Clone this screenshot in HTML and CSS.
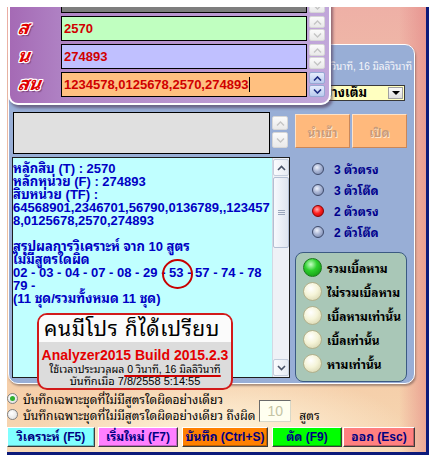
FILE: index.html
```html
<!DOCTYPE html>
<html lang="th">
<head>
<meta charset="utf-8">
<title>Analyzer2015</title>
<link rel="stylesheet" href="styles.css">
</head>
<body>
<div class="window">
  <div class="blue">
    <div class="info">ใช้เวลาประมวลผล 0 วินาที, 16 มิลลิวินาที</div>
    <div class="combo-row">
      <div class="combo">
        <span class="combo-txt">แสดงผลอย่างเต็ม</span>
        <span class="drop"><span class="tri"></span></span>
      </div>
    </div>
    <div class="io-row">
      <div class="memo"></div>
      <div class="spin2">
        <span class="sb sb-a"><svg width="9" height="5" viewBox="0 0 9 5"><path d="M1 4.5 L4.5 1 L8 4.5" fill="none" stroke="#c4c4c4" stroke-width="1.4"/></svg></span>
        <span class="sb sb-b"><svg width="9" height="5" viewBox="0 0 9 5"><path d="M1 0.5 L4.5 4 L8 0.5" fill="none" stroke="#c4c4c4" stroke-width="1.4"/></svg></span>
      </div>
      <div class="obtn obtn-a">นำเข้า</div>
      <div class="obtn obtn-b">เปิด</div>
    </div>
    <div class="main-row">
      <div class="cyan-wrap">
        <div class="cyan-text">
          <div class="ln">หลักสิบ (T) : 2570</div>
          <div class="ln">หลักหน่วย (F) : 274893</div>
          <div class="ln">สิบหน่วย (TF) :</div>
          <div class="ln">64568901,2346701,56790,0136789,,123457</div>
          <div class="ln">8,0125678,2570,274893</div>
          <div class="ln">&nbsp;</div>
          <div class="ln">สรุปผลการวิเคราะห์ จาก 10 สูตร</div>
          <div class="ln">ไม่มีสูตรใดผิด</div>
          <div class="ln">02 - 03 - 04 - 07 - 08 - 29 - <span class="circ">53</span> - 57 - 74 - 78</div>
          <div class="ln">79 -</div>
          <div class="ln">(11 ชุด/รวมทั้งหมด 11 ชุด)</div>
        </div>
        <div class="vscroll">
          <span class="sbtn"><svg width="9" height="6" viewBox="0 0 9 6"><path d="M1 5 L4.5 1.5 L8 5" fill="none" stroke="#4a5468" stroke-width="1.6"/></svg></span>
          <span class="thumb"><span class="grip"></span></span>
          <span class="track"></span>
          <span class="sbtn"><svg width="9" height="6" viewBox="0 0 9 6"><path d="M1 1 L4.5 4.5 L8 1" fill="none" stroke="#4a5468" stroke-width="1.6"/></svg></span>
        </div>
      </div>
      <div class="rcol">
        <div class="rg1">
          <div class="ri"><span class="ball ball-blue"></span><span class="ri-t">3 ตัวตรง</span></div>
          <div class="ri"><span class="ball ball-blue"></span><span class="ri-t">3 ตัวโต๊ด</span></div>
          <div class="ri"><span class="ball ball-red"></span><span class="ri-t">2 ตัวตรง</span></div>
          <div class="ri"><span class="ball ball-blue"></span><span class="ri-t">2 ตัวโต๊ด</span></div>
        </div>
        <div class="gbox">
          <div class="gi"><span class="gball gball-on"></span><span class="gi-t">รวมเบิ้ลหาม</span></div>
          <div class="gi"><span class="gball"></span><span class="gi-t">ไม่รวมเบิ้ลหาม</span></div>
          <div class="gi"><span class="gball"></span><span class="gi-t">เบิ้ลหามเท่านั้น</span></div>
          <div class="gi"><span class="gball"></span><span class="gi-t">เบิ้ลเท่านั้น</span></div>
          <div class="gi"><span class="gball"></span><span class="gi-t">หามเท่านั้น</span></div>
        </div>
      </div>
    </div>
  </div>

  <div class="opts">
    <div class="opt"><span class="radio radio-on"></span><span class="opt-t">บันทึกเฉพาะชุดที่ไม่มีสูตรใดผิดอย่างเดียว</span></div>
    <div class="opt"><span class="radio"></span><span class="opt-t">บันทึกเฉพาะชุดที่ไม่มีสูตรใดผิดอย่างเดียว ถึงผิด</span><span class="num">10</span><span class="opt-t unit">สูตร</span></div>
  </div>

  <div class="btns">
    <span class="btn btn-cyan">วิเคราะห์ (F5)</span>
    <span class="btn btn-pink">เริ่มใหม่ (F7)</span>
    <span class="btn btn-orange">บันทึก (Ctrl+S)</span>
    <span class="btn btn-green">ตัด (F9)</span>
    <span class="btn btn-salmon">ออก (Esc)</span>
  </div>

  <div class="purple">
    <div class="prow">
      <span class="lbl"></span>
      <span class="field field-gray"></span>
      <span class="spin">
        <span class="sb"><svg width="9" height="5" viewBox="0 0 9 5"><path d="M1 4.5 L4.5 1 L8 4.5" fill="none" stroke="#c4c4c4" stroke-width="1.4"/></svg></span>
        <span class="sb"><svg width="9" height="5" viewBox="0 0 9 5"><path d="M1 0.5 L4.5 4 L8 0.5" fill="none" stroke="#c4c4c4" stroke-width="1.4"/></svg></span>
      </span>
    </div>
    <div class="prow">
      <span class="lbl">ส</span>
      <span class="field field-green">2570</span>
      <span class="spin">
        <span class="sb"><svg width="9" height="5" viewBox="0 0 9 5"><path d="M1 4.5 L4.5 1 L8 4.5" fill="none" stroke="#c4c4c4" stroke-width="1.4"/></svg></span>
        <span class="sb"><svg width="9" height="5" viewBox="0 0 9 5"><path d="M1 0.5 L4.5 4 L8 0.5" fill="none" stroke="#c4c4c4" stroke-width="1.4"/></svg></span>
      </span>
    </div>
    <div class="prow">
      <span class="lbl">น</span>
      <span class="field field-lav">274893</span>
      <span class="spin">
        <span class="sb"><svg width="9" height="5" viewBox="0 0 9 5"><path d="M1 4.5 L4.5 1 L8 4.5" fill="none" stroke="#c4c4c4" stroke-width="1.4"/></svg></span>
        <span class="sb"><svg width="9" height="5" viewBox="0 0 9 5"><path d="M1 0.5 L4.5 4 L8 0.5" fill="none" stroke="#c4c4c4" stroke-width="1.4"/></svg></span>
      </span>
    </div>
    <div class="prow">
      <span class="lbl">สน</span>
      <span class="field field-orange">1234578,0125678,2570,274893<span class="caret"></span></span>
      <span class="spin">
        <span class="sb sb-on"><svg width="9" height="5" viewBox="0 0 9 5"><path d="M1 4.5 L4.5 1 L8 4.5" fill="none" stroke="#1c2c80" stroke-width="1.6"/></svg></span>
        <span class="sb sb-on"><svg width="9" height="5" viewBox="0 0 9 5"><path d="M1 0.5 L4.5 4 L8 0.5" fill="none" stroke="#1c2c80" stroke-width="1.6"/></svg></span>
      </span>
    </div>
  </div>

  <div class="promo">
    <div class="promo-top">คนมีโปร ก็ได้เปรียบ</div>
    <div class="promo-body">
      <div class="promo-title">Analyzer2015 Build 2015.2.3</div>
      <div class="promo-line promo-l2">ใช้เวลาประมวลผล<span class="ul"> 0 วินาที, 16 มิลลิวินาที</span></div>
      <div class="promo-line promo-l3">บันทึกเมื่อ 7/8/2558 5:14:55</div>
    </div>
  </div>
</div>
</body>
</html>
```

FILE: styles.css
```css
* { box-sizing: border-box; }
html, body { margin: 0; padding: 0; background: #ffffff; }
body {
  width: 435px;
  height: 463px;
  overflow: hidden;
  font-family: "Liberation Sans", "Noto Sans Thai Looped", "Waree", "Loma", "Garuda", "Noto Sans Thai", "Noto Sans", sans-serif;
  font-size: 12px;
  color: #000;
}

.window {
  position: relative;
  margin: 7px 0 0 7px;
  width: 422px;
  height: 448px;
  padding-top: 37px;
  border-right: 3px solid #0c1a7a;
  border-bottom: 3px solid #0c1a7a;
  overflow: hidden;
  background:
    linear-gradient(90deg, rgba(226,128,128,0) 392px, rgba(226,128,128,0.55) 419px),
    radial-gradient(ellipse 190px 70px at 215px 432px, rgba(255,246,222,1), rgba(255,246,222,0)),
    linear-gradient(180deg, #eeb0a6 0px, #f0bca8 80px, #f3c6a6 250px, #f5cfaa 380px, #f7d8b4 445px);
}

/* ---------- purple overlay panel ---------- */
.purple {
  position: absolute;
  left: 1px;
  top: -30px;
  width: 323px;
  height: 128px;
  padding-top: 11px;
  border: 2px solid #ffffff;
  border-top: none;
  border-radius: 0 0 10px 10px;
  background: linear-gradient(90deg, #a56ab5 0%, #b084c5 18%, #b996d0 55%, #c1a7da 100%);
  box-shadow: 2px 3px 3px rgba(70, 40, 70, 0.55);
  display: flex;
  flex-direction: column;
  gap: 3px;
}
.prow { display: flex; align-items: center; height: 25px; }
.lbl {
  width: 51px;
  padding-left: 8px;
  font-size: 18px;
  font-weight: bold;
  font-style: italic;
  color: #e00000;
  text-shadow:
    1px 0 0 #fff, -1px 0 0 #fff, 0 1px 0 #fff, 0 -1px 0 #fff,
    1px 1px 0 #fff, -1px -1px 0 #fff, 1px -1px 0 #fff, -1px 1px 0 #fff,
    2px 2px 1px rgba(60, 0, 40, 0.45);
  line-height: 25px;
  transform: skewX(-8deg);
}
.field {
  width: 246px;
  height: 25px;
  border: 1px solid #000;
  padding-left: 2px;
  font-size: 13px;
  font-weight: bold;
  line-height: 22px;
  color: #d00000;
  white-space: nowrap;
  display: flex;
  align-items: center;
}
.field-gray { background: #7e7e7e; }
.field-green { background: #c0ffc0; }
.field-lav { background: #c0c0ff; }
.field-orange { background: #ffc080; }
.caret { display: inline-block; width: 1px; height: 15px; background: #000; margin-left: 1px; }

.spin { margin-left: 2px; width: 16px; display: flex; flex-direction: column; gap: 1px; }
.sb {
  height: 12px;
  border: 1px solid #d6d6d6;
  border-radius: 2px;
  background: linear-gradient(180deg, #fbfbfb, #e9e9e9);
  display: flex;
  align-items: center;
  justify-content: center;
}
.sb-on { border-color: #97a9d4; background: linear-gradient(180deg, #e6edfd, #b9caee); }

/* ---------- blue main panel ---------- */
.blue {
  margin-left: 1px;
  width: 407px;
  height: 340px;
  border: 1px solid #ffffff;
  border-radius: 10px;
  background: #98aed6;
  box-shadow: 1px 2px 2px rgba(80, 60, 60, 0.45);
  display: flex;
  flex-direction: column;
}
.info {
  margin-top: 16px;
  height: 12px;
  line-height: 12px;
  padding-right: 2px;
  font-size: 10px;
  color: #f6f6fa;
  text-align: right;
  white-space: nowrap;
}
.combo-row { margin-top: 12px; height: 16px; display: flex; justify-content: flex-end; padding-right: 9px; }
.combo {
  width: 170px;
  height: 16px;
  border: 1px solid #3a3a3a;
  background: #ffffc0;
  display: flex;
  align-items: center;
  justify-content: flex-end;
  overflow: hidden;
}
.combo-txt { white-space: nowrap; font-size: 13px; font-weight: bold; margin-right: 21px; line-height: 14px; }
.drop {
  width: 15px;
  height: 12px;
  margin-right: 1px;
  border: 1px solid #a0a0a0;
  background: linear-gradient(180deg, #fafafa, #dedede);
  display: flex;
  align-items: center;
  justify-content: center;
}
.tri { width: 0; height: 0; border-left: 4px solid transparent; border-right: 4px solid transparent; border-top: 4px solid #000; }

.io-row { margin-top: 11px; height: 42px; display: flex; }
.memo { margin-left: 4px; width: 257px; height: 42px; border: 1px solid #000; background: #e0e0e0; }
.spin2 { margin-left: 2px; width: 16px; padding-top: 4px; display: flex; flex-direction: column; gap: 2px; }
.spin2 .sb-a { height: 14px; }
.spin2 .sb-b { height: 16px; }
.obtn {
  margin-top: 2px;
  width: 55px;
  height: 34px;
  border: 1px solid;
  border-color: #ffe2c6 #c9875a #c9875a #ffe2c6;
  background: #ffb97c;
  color: #c89b78;
  font-size: 12px;
  font-weight: bold;
  text-shadow: 1px 1px 0 #ffe6cf;
  display: flex;
  align-items: center;
  justify-content: center;
}
.obtn-a { margin-left: 7px; }
.obtn-b { margin-left: 2px; }

.main-row { margin-top: 3px; height: 225px; display: flex; align-items: flex-start; }
.cyan-wrap {
  margin-left: 3px;
  width: 278px;
  height: 221px;
  border: 1px solid #1e1e1e;
  background: #c0ffff;
  display: flex;
}
.cyan-text {
  flex: 1;
  padding-top: 4px;
  font-size: 13px;
  font-weight: bold;
  line-height: 13px;
  color: #0000c4;
  white-space: nowrap;
  overflow: hidden;
}
.ln { height: 13px; }
.circ { position: relative; }
.circ::after {
  content: "";
  position: absolute;
  left: -7px;
  top: -6px;
  width: 27px;
  height: 26px;
  border: 2px solid #c80000;
  border-radius: 50%;
}
.vscroll {
  width: 17px;
  display: flex;
  flex-direction: column;
  background: #eef1f6;
  border-left: 1px solid #d2d9e4;
}
.sbtn {
  height: 17px;
  margin: 1px 0;
  border: 1px solid #c4cedd;
  border-radius: 2px;
  background: linear-gradient(90deg, #fbfcfe, #e5eaf2);
  display: flex;
  align-items: center;
  justify-content: center;
}
.thumb {
  height: 71px;
  border: 1px solid #b3bfd3;
  border-radius: 2px;
  background: linear-gradient(90deg, #f7f9fd, #dfe5ef);
  display: flex;
  align-items: center;
  justify-content: center;
}
.grip { width: 7px; height: 5px; border-top: 1px solid #9aa6bb; border-bottom: 1px solid #9aa6bb; position: relative; }
.grip::after { content: ""; position: absolute; left: 0; right: 0; top: 1px; border-top: 1px solid #9aa6bb; }
.track { flex: 1; }

.rcol { margin-left: 5px; width: 112px; }
.rg1 { padding-top: 1px; }
.ri { height: 21px; display: flex; align-items: center; }
.ball {
  margin-left: 17px;
  width: 12px;
  height: 12px;
  border-radius: 50%;
  border: 1px solid #3e4a6a;
}
.ball-blue { background: radial-gradient(circle at 40% 35%, #eef2fc 0%, #a9b5d4 45%, #6f7fa8 100%); }
.ball-red { border-color: #8a0000; background: radial-gradient(circle at 40% 35%, #ffb0b0 0%, #ff2020 45%, #b00000 100%); }
.ri-t { margin-left: 10px; font-size: 12px; font-weight: bold; color: #00008c; white-space: nowrap; }

.gbox {
  margin-top: 10px;
  width: 112px;
  height: 130px;
  padding-top: 2px;
  border: 1px solid #3b5a82;
  border-radius: 8px;
  background: #a9c7b7;
}
.gi { height: 24px; display: flex; align-items: center; }
.gball {
  margin-left: 7px;
  width: 19px;
  height: 19px;
  border-radius: 50%;
  border: 1px solid #b3b08a;
  background: radial-gradient(circle at 40% 32%, #ffffff 0%, #f5f4d8 45%, #cfcca4 100%);
}
.gball-on { border-color: #1a7a1a; background: radial-gradient(circle at 40% 32%, #c8ffc8 0%, #2ed02e 40%, #0c8a0c 100%); }
.gi-t { margin-left: 5px; font-size: 12px; font-weight: bold; color: #000; white-space: nowrap; }

/* ---------- bottom options ---------- */
.opts { margin-top: 6px; }
.opt { height: 16px; display: flex; align-items: center; white-space: nowrap; }
.radio {
  width: 11px;
  height: 11px;
  border-radius: 50%;
  border: 1px solid #808080;
  background: radial-gradient(circle at 40% 35%, #ffffff, #dcdcdc);
  margin-right: 5px;
  position: relative;
}
.radio-on::after {
  content: "";
  position: absolute;
  left: 2px;
  top: 2px;
  width: 5px;
  height: 5px;
  border-radius: 50%;
  background: #2fb02f;
}
.opt-t { font-size: 12px; }
.num {
  align-self: flex-end;
  margin-left: 4px;
  width: 32px;
  height: 22px;
  border: 1px solid #6a6a6a;
  border-right-color: #d8d8c8;
  border-bottom-color: #d8d8c8;
  background: #fffff0;
  color: #c4c4a4;
  font-size: 14px;
  text-align: center;
  line-height: 20px;
  flex: none;
}
.unit { margin-left: 8px; }

/* ---------- bottom buttons ---------- */
.btns { margin-top: 5px; height: 20px; display: flex; }
.btn {
  height: 20px;
  border: 1px solid;
  border-color: #ffffff #3c3c3c #3c3c3c #ffffff;
  box-shadow: inset -1px -1px 0 rgba(0, 0, 0, 0.25);
  color: #000080;
  font-size: 12px;
  font-weight: bold;
  line-height: 18px;
  text-align: center;
  white-space: nowrap;
}
.btn-cyan { width: 88px; background: #80ffff; }
.btn-pink { width: 80px; margin-left: 3px; background: #ff80ff; }
.btn-orange { width: 86px; margin-left: 4px; background: #ff8000; }
.btn-green { width: 70px; margin-left: 4px; background: #00ff00; }
.btn-salmon { width: 72px; margin-left: 1px; background: #ff8080; }

/* ---------- promo overlay ---------- */
.promo {
  position: absolute;
  left: 30px;
  top: 306px;
  width: 196px;
  height: 77px;
  border: 2px solid #d21a1a;
  border-radius: 10px;
  overflow: hidden;
  background: #dcdcdc;
}
.promo-top {
  height: 27px;
  background: #fbfbfb;
  padding-left: 5px;
  font-size: 21px;
  letter-spacing: 0.6px;
  line-height: 27px;
  white-space: nowrap;
}
.promo-body { padding-top: 5px; text-align: center; }
.promo-title { height: 16px; line-height: 16px; font-size: 14px; font-weight: bold; color: #e40000; white-space: nowrap; }
.promo-line { height: 12px; line-height: 12px; white-space: nowrap; }
.promo-l2 { font-size: 10.5px; }
.promo-l3 { font-size: 11px; }
.ul { text-decoration: underline; text-decoration-color: #d00000; text-decoration-thickness: 2px; text-underline-offset: 2px; }
```
